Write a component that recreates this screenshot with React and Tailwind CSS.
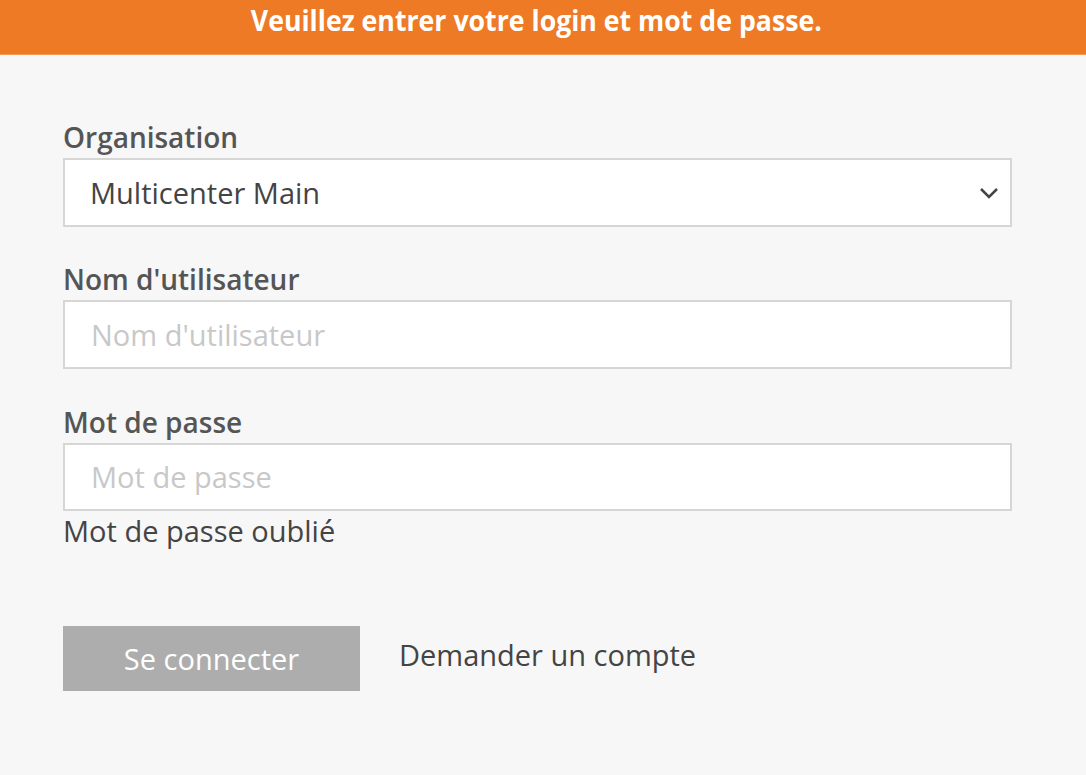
export default function App() {
  return (
    <div className="min-h-[775px] w-full bg-[#f7f7f7]" style={{ fontFamily: '"Open Sans", "Noto Sans", sans-serif' }}>
      <div className="flex h-[55px] items-start justify-center border-b border-[#f39a52] bg-[#ee7a26] pr-[13px] pt-[5px]">
        <span className="origin-center scale-x-[0.92] text-[29px] font-bold leading-none text-white">
          Veuillez entrer votre login et mot de passe.
        </span>
      </div>

      <div className="flex w-[1012px] flex-col pl-[63px] pt-[63px]">
        <label className="mb-[2px] text-[28px] font-semibold leading-[38px] text-[#555]">Organisation</label>
        <div className="flex h-[69px] w-[949px] items-center justify-between border-2 border-[#d6d6d6] bg-white pl-[25px] pr-[12px]">
          <span className="text-[29px] text-[#444]">Multicenter Main</span>
          <svg width="20" height="12" viewBox="0 0 20 12">
            <path d="M3 2 L11 10 L19 2" fill="none" stroke="#444" strokeWidth="2.5" />
          </svg>
        </div>

        <label className="mb-[2px] mt-[33px] text-[28px] font-semibold leading-[38px] text-[#555]">Nom d'utilisateur</label>
        <div className="flex h-[69px] w-[949px] items-center border-2 border-[#d6d6d6] bg-white pl-[26px]">
          <span className="text-[29px] text-[#c8c8c8]">Nom d'utilisateur</span>
        </div>

        <label className="mb-[2px] mt-[34px] text-[28px] font-semibold leading-[38px] text-[#555]">Mot de passe</label>
        <div className="flex h-[68px] w-[949px] items-center border-2 border-[#d6d6d6] bg-white pl-[26px]">
          <span className="text-[29px] text-[#c8c8c8]">Mot de passe</span>
        </div>
        <span className="mt-[1px] text-[29px] leading-[38px] text-[#444]">Mot de passe oublié</span>

        <div className="mt-[76px] flex items-center">
          <div className="flex h-[65px] w-[297px] items-center justify-center bg-[#adadad]">
            <span className="text-[29px] text-white">Se connecter</span>
          </div>
          <span className="ml-[39px] -mt-[8px] text-[29px] text-[#444]">Demander un compte</span>
        </div>
      </div>
    </div>
  )
}
